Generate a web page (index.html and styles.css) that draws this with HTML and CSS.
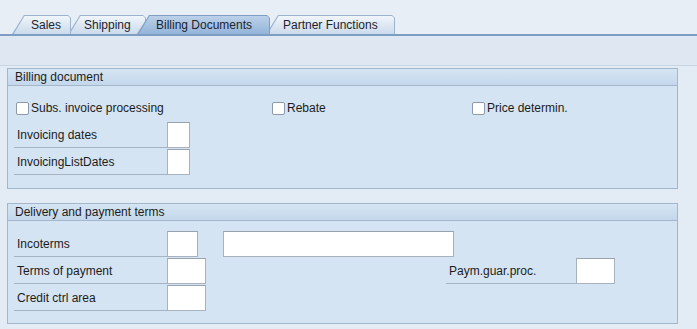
FILE: index.html
```html
<!DOCTYPE html>
<html lang="en">

<head>
    <meta charset="UTF-8">
    <title>Billing Documents</title>
    <link rel="stylesheet" href="styles.css">
</head>

<body>

	<div class="tabstrip">
		<div class="tab sales"><span>Sales</span></div>
		<div class="tab shipping"><span>Shipping</span></div>
		<div class="tab billing active"><span>Billing Documents</span></div>
		<div class="tab partner"><span>Partner Functions</span></div>
	</div>

	<div class="toolbar"></div>

	<main class="content">

		<section class="group">
			<div class="group-title">Billing document</div>
			<div class="group-body">
				<div class="row checks">
					<label class="check col-a"><span class="box"></span>Subs. invoice processing</label>
					<label class="check col-b"><span class="box"></span>Rebate</label>
					<label class="check col-c"><span class="box"></span>Price determin.</label>
				</div>
				<div class="row">
					<div class="label">Invoicing dates</div>
					<div class="field w22"></div>
				</div>
				<div class="row">
					<div class="label">InvoicingListDates</div>
					<div class="field w22"></div>
				</div>
			</div>
		</section>

		<section class="group second">
			<div class="group-title">Delivery and payment terms</div>
			<div class="group-body">
				<div class="row">
					<div class="label">Incoterms</div>
					<div class="field w30"></div>
					<div class="field w230 gap"></div>
				</div>
				<div class="row">
					<div class="label">Terms of payment</div>
					<div class="field w38"></div>
					<div class="label right">Paym.guar.proc.</div>
					<div class="field w38"></div>
				</div>
				<div class="row">
					<div class="label">Credit ctrl area</div>
					<div class="field w38"></div>
				</div>
			</div>
		</section>

	</main>

</body>
</html>
```

FILE: styles.css
```css
		body {
			font-family: "Liberation Sans", Arial, sans-serif;
			font-size: 12px;
			margin: 0;
			padding: 0;
			background-color: #e3ebf4;
			color: #1c1c1c;
		}

		/* tab strip */
		.tabstrip {
			display: flex;
			align-items: flex-end;
			height: 34px;
			padding-left: 12px;
			background-color: #e7eef6;
			border-bottom: 2px solid #7d9dc3;
		}

		.tab {
			position: relative;
			height: 19px;
			box-sizing: border-box;
			background-color: #9cb3cc;
			clip-path: polygon(12px 0, calc(100% - 3px) 0, 100% 3px, 100% 100%, 0 100%);
			line-height: 20px;
			color: #1c2430;
		}

		.tab::before {
			content: "";
			position: absolute;
			top: 1px;
			left: 1px;
			right: 1px;
			bottom: 0;
			background: linear-gradient(#f0f5fa, #cbdaeb);
			clip-path: polygon(11.6px 0, calc(100% - 2px) 0, 100% 2px, 100% 100%, 0.6px 100%);
		}

		.tab span {
			position: relative;
		}

		.sales {
			width: 59px;
			padding-left: 19px;
			z-index: 4;
		}

		.shipping {
			width: 78px;
			margin-left: -3px;
			padding-left: 16px;
			z-index: 3;
		}

		.billing {
			width: 133px;
			margin-left: -9px;
			padding-left: 19px;
		}

		.partner {
			width: 129px;
			margin-left: -4px;
			padding-left: 17px;
			z-index: 2;
		}

		.tab.active {
			z-index: 5;
			background-color: #7f9fc5;
		}

		.tab.active::before {
			background: linear-gradient(#bcd1e9, #94b4da);
		}

		.toolbar {
			height: 29px;
			background-color: #dfe8f2;
			border-bottom: 1px solid #c8d5e2;
		}

		/* groups */
		.content {
			padding: 2px 19px 0 7px;
		}

		.group {
			background-color: #d5e4f2;
			border: 1px solid #a3b7cc;
		}

		.group.second {
			margin-top: 14px;
		}

		.group-title {
			height: 16px;
			line-height: 16px;
			padding-left: 7px;
			background: linear-gradient(#d6e5f3, #c4d7eb);
			border-bottom: 1px solid #a3b7cc;
		}

		.group-body {
			display: flex;
			flex-direction: column;
			gap: 1px;
			padding: 9px 0 13px 6px;
		}

		.second .group-body {
			padding-top: 10px;
			padding-bottom: 12px;
		}

		.row {
			display: flex;
			align-items: stretch;
			height: 26px;
		}

		.label {
			width: 153px;
			padding-left: 3px;
			line-height: 26px;
			border-bottom: 1px solid #a6b4c2;
			box-sizing: border-box;
		}

		.label.right {
			width: 130px;
			margin-left: 240px;
		}

		.field {
			background-color: #fff;
			border: 1px solid #a7b2be;
			border-top-color: #98a3af;
			box-sizing: border-box;
		}

		.w22 { width: 23px; }
		.w30 { width: 31px; }
		.w38 { width: 39px; }
		.w230 { width: 231px; }

		.field.gap {
			margin-left: 25px;
		}

		/* checkboxes */
		.checks {
			padding-left: 2px;
		}

		.check {
			display: flex;
			align-items: center;
			gap: 2px;
		}

		.col-a { width: 256px; }
		.col-b { width: 200px; }

		.box {
			width: 11px;
			height: 11px;
			background-color: #fff;
			border: 1px solid #8c9aab;
			border-radius: 2px;
		}
```
